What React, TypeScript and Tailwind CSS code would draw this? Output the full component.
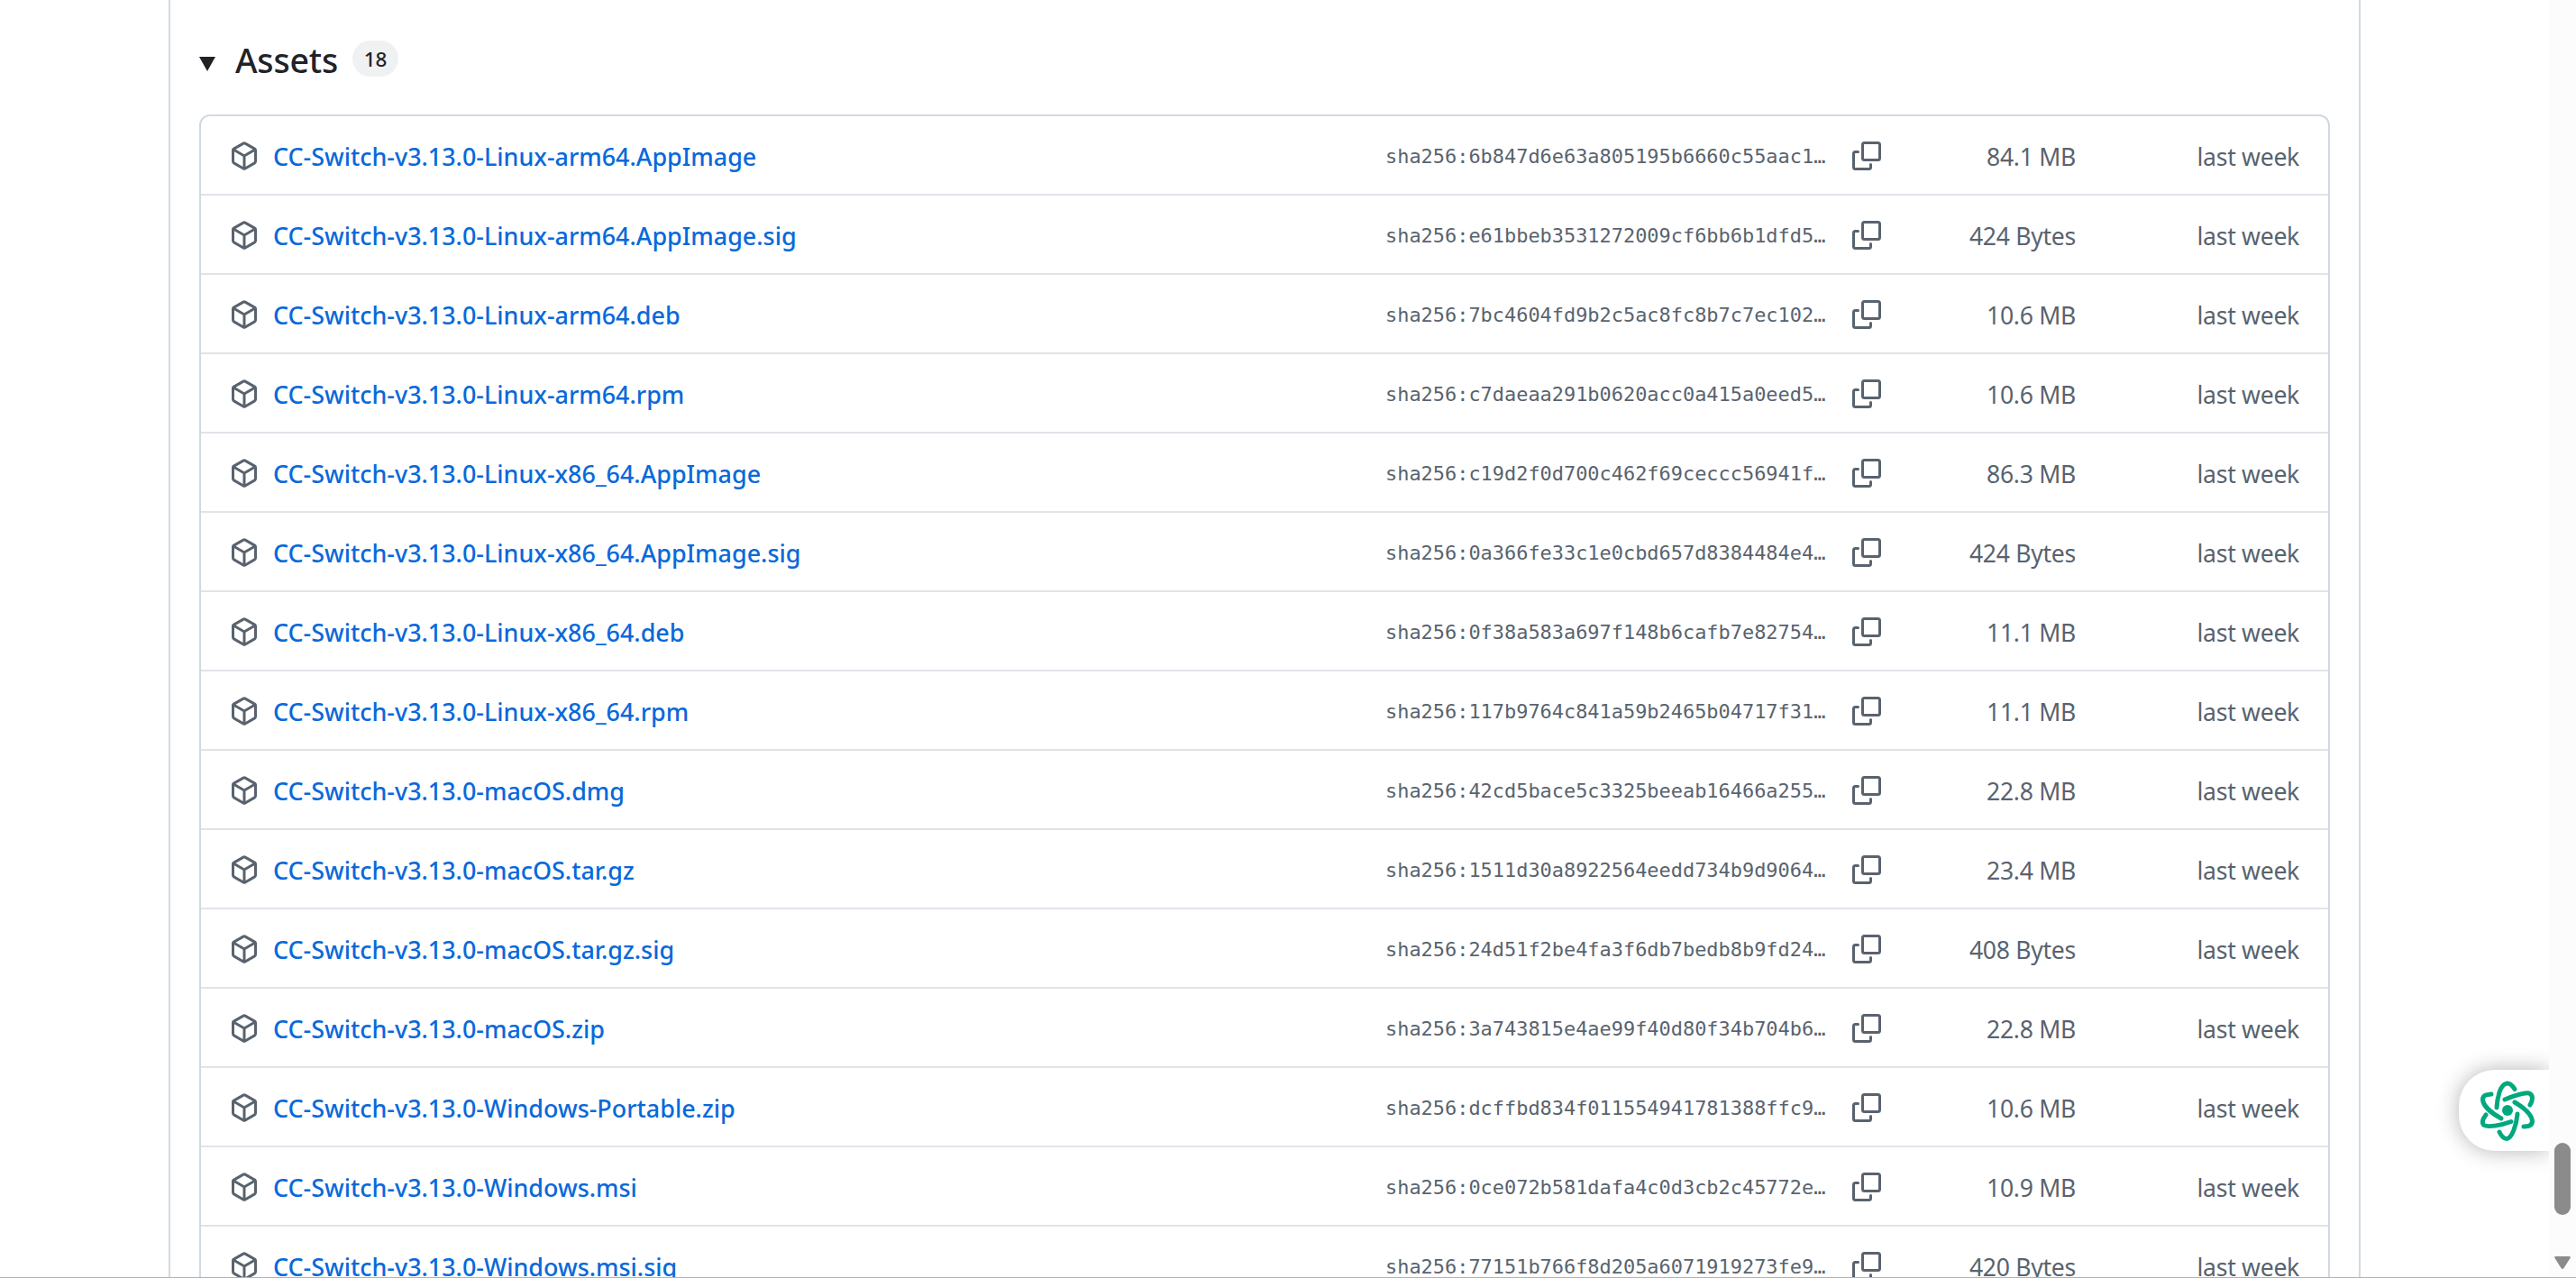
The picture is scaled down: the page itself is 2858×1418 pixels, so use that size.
import React from 'react';

interface Asset {
  name: string;
  sha: string;
  size: string;
}

const assets: Asset[] = [
  { name: 'CC-Switch-v3.13.0-Linux-arm64.AppImage', sha: '6b847d6e63a805195b6660c55aac1', size: '84.1 MB' },
  { name: 'CC-Switch-v3.13.0-Linux-arm64.AppImage.sig', sha: 'e61bbeb3531272009cf6bb6b1dfd5', size: '424 Bytes' },
  { name: 'CC-Switch-v3.13.0-Linux-arm64.deb', sha: '7bc4604fd9b2c5ac8fc8b7c7ec102', size: '10.6 MB' },
  { name: 'CC-Switch-v3.13.0-Linux-arm64.rpm', sha: 'c7daeaa291b0620acc0a415a0eed5', size: '10.6 MB' },
  { name: 'CC-Switch-v3.13.0-Linux-x86_64.AppImage', sha: 'c19d2f0d700c462f69ceccc56941f', size: '86.3 MB' },
  { name: 'CC-Switch-v3.13.0-Linux-x86_64.AppImage.sig', sha: '0a366fe33c1e0cbd657d8384484e4', size: '424 Bytes' },
  { name: 'CC-Switch-v3.13.0-Linux-x86_64.deb', sha: '0f38a583a697f148b6cafb7e82754', size: '11.1 MB' },
  { name: 'CC-Switch-v3.13.0-Linux-x86_64.rpm', sha: '117b9764c841a59b2465b04717f31', size: '11.1 MB' },
  { name: 'CC-Switch-v3.13.0-macOS.dmg', sha: '42cd5bace5c3325beeab16466a255', size: '22.8 MB' },
  { name: 'CC-Switch-v3.13.0-macOS.tar.gz', sha: '1511d30a8922564eedd734b9d9064', size: '23.4 MB' },
  { name: 'CC-Switch-v3.13.0-macOS.tar.gz.sig', sha: '24d51f2be4fa3f6db7bedb8b9fd24', size: '408 Bytes' },
  { name: 'CC-Switch-v3.13.0-macOS.zip', sha: '3a743815e4ae99f40d80f34b704b6', size: '22.8 MB' },
  { name: 'CC-Switch-v3.13.0-Windows-Portable.zip', sha: 'dcffbd834f011554941781388ffc9', size: '10.6 MB' },
  { name: 'CC-Switch-v3.13.0-Windows.msi', sha: '0ce072b581dafa4c0d3cb2c45772e', size: '10.9 MB' },
  { name: 'CC-Switch-v3.13.0-Windows.msi.sig', sha: '77151b766f8d205a6071919273fe9', size: '420 Bytes' },
];

const PackageIcon = () => (
  <svg viewBox="0 0 16 16" fill="currentColor" className="h-8 w-8 shrink-0">
    <path d="m8.878.392 5.25 3.045c.54.314.872.89.872 1.514v6.098a1.75 1.75 0 0 1-.872 1.514l-5.25 3.045a1.75 1.75 0 0 1-1.756 0l-5.25-3.045A1.75 1.75 0 0 1 1 11.049V4.951c0-.624.332-1.201.872-1.514L7.122.392a1.75 1.75 0 0 1 1.756 0ZM7.875 1.69l-4.63 2.685L8 7.133l4.755-2.758-4.63-2.685a.248.248 0 0 0-.25 0ZM2.5 5.677v5.372c0 .09.047.171.125.216l4.625 2.683V8.432Zm6.25 8.271 4.625-2.683a.25.25 0 0 0 .125-.216V5.677L8.75 8.432Z" />
  </svg>
);

// Two offset rounded frames, the back one partly hidden
const CopyIcon = () => (
  <svg viewBox="0 0 32 32" fill="none" stroke="currentColor" strokeWidth="3" className="h-8 w-8 shrink-0">
    <rect x="11.5" y="1.5" width="19" height="19" rx="2" />
    <path d="M6.500 11.5H3.500a2 2 0 0 0-2 2v15a2 2 0 0 0 2 2h15a2 2 0 0 0 2-2V25.500" strokeLinecap="round" />
  </svg>
);

const AtomIcon = () => (
  <svg viewBox="0 0 60 68" fill="none" stroke="#00a87e" strokeWidth="5" strokeLinecap="round" className="h-[68px] w-[60px]">
    <path d="M38 9.500C32 0 25 1 21 13Q18.500 21 18 30" />
    <path d="M27 21C36 17 49 13 54 14C59 16 58 22 55 27" />
    <path d="M38 24C48 30 57 38 57.500 45C57.500 50 53 51 48 51" />
    <path d="M41 37C40 49 35 64 29 64.500C25 64.500 23 61 21 57" />
    <path d="M34 45.500C22 50 8 52 4 49.500C1 47 3 42 6 38" />
    <path d="M23 42C12 36 3 28 2.500 21C2.500 16 7 15.500 12 15" />
    <circle cx="30" cy="33" r="6" fill="#00a87e" stroke="none" />
  </svg>
);

const AssetRow: React.FC<{ asset: Asset }> = ({ asset }) => (
  <li className="box-content flex h-[86px] items-center border-t-2 border-[#dfe4e9] px-8 first:border-t-0">
    <span className="flex w-[48px] pt-0.5"><PackageIcon /></span>
    <a className="flex-1 whitespace-nowrap pt-1 text-[26.9px] font-medium text-[#0969da]">{asset.name}</a>
    <span className="w-[518px] whitespace-nowrap pt-1 font-['DejaVu_Sans_Mono',monospace] text-[21.93px]">sha256:{asset.sha}…</span>
    <button className="flex pt-0.5"><CopyIcon /></button>
    <span className="w-[216px] pt-1.5 text-right tracking-[-0.3px]">{asset.size}</span>
    <span className="w-[248px] pt-1.5 text-right tracking-[-0.3px]">last week</span>
  </li>
);

const Scrollbar = () => (
  <div className="flex w-[30px] flex-col items-center justify-end bg-[#fcfcfc] pb-[9px]">
    <div className="h-20 w-[18px] rounded-full bg-[#8b8b8b]" />
    <svg viewBox="0 0 18 14" className="mt-[46px] h-[14px] w-[18px]" fill="#8b8b8b">
      <path d="M1.500 0h15q2 0 1 2l-7 11q-1.500 2-3 0l-7-11q-1-2 1-2z" />
    </svg>
  </div>
);

export default function App() {
  return (
    <div className="relative flex h-[1418px] w-[2858px] overflow-hidden border-b border-[#a9b5bb] bg-white font-['Noto_Sans',sans-serif] text-[26.6px] text-[#59636e]">
      <div className="flex flex-1 pl-[187px]">
        <main className="h-full w-[2432px] border-x-2 border-[#d1d9e0] px-8">
          <div className="flex h-[127px] items-start pt-[43px] text-[#1f2328]">
            <svg viewBox="0 0 18 16" className="mt-5 h-4 w-[18px]" fill="currentColor">
              <path d="M0 0h18L9 16z" />
            </svg>
            <h3 className="ml-[22px] text-[37.5px] font-medium leading-[48px] tracking-[-0.2px]">Assets</h3>
            <span className="ml-4 mt-0.5 flex h-10 w-[51px] items-center justify-center rounded-full bg-[#eff1f3] pt-0.5 text-[22.5px] font-medium tracking-[-0.2px]">18</span>
          </div>
          <ul className="rounded-t-xl border-2 border-[#d1d9e0]">
            {assets.map((asset) => (
              <AssetRow key={asset.name} asset={asset} />
            ))}
          </ul>
        </main>
      </div>
      <Scrollbar />
      <div className="absolute right-[30px] top-[1187px] h-[90px] w-[100px] rounded-l-[40px] bg-white pl-6 pt-3 shadow-[0_0_24px_rgba(0,0,0,0.3)] [clip-path:inset(-40px_0_-40px_-40px)]">
        <AtomIcon />
      </div>
    </div>
  );
}
